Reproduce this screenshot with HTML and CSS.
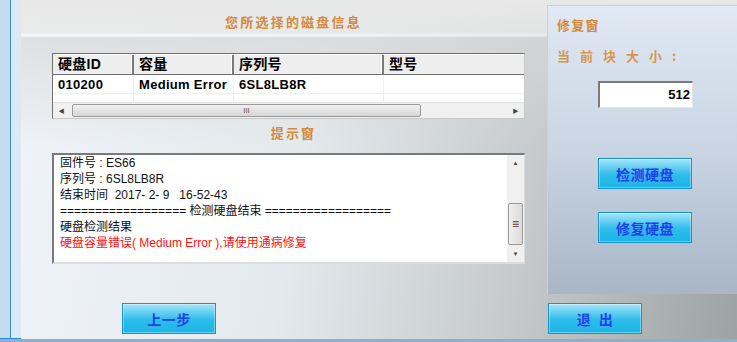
FILE: index.html
```html
<!DOCTYPE html>
<html lang="zh-CN">
  <head>
    <meta charset="UTF-8" />
    <title>硬盘检测修复</title>
    <link rel="stylesheet" href="styles.css">
  </head>
  <body>
    <div class="window">
      <div class="rail"></div>
      <div class="main">
        <div class="work">
          <div class="left">
            <h2 class="title">您所选择的磁盘信息</h2>
            <div class="grid">
              <div class="row head">
                <div class="cell c1">硬盘ID</div>
                <div class="cell c2">容量</div>
                <div class="cell c3">序列号</div>
                <div class="cell c4">型号</div>
              </div>
              <div class="row">
                <div class="cell c1">010200</div>
                <div class="cell c2">Medium Error</div>
                <div class="cell c3">6SL8LB8R</div>
                <div class="cell c4"></div>
              </div>
              <div class="row empty">
                <div class="cell c1"></div>
                <div class="cell c2"></div>
                <div class="cell c3"></div>
                <div class="cell c4"></div>
              </div>
              <div class="hscroll">
                <div class="arrow">&#9664;</div>
                <div class="hthumb">III</div>
                <div class="htrack"></div>
                <div class="arrow">&#9654;</div>
              </div>
            </div>
            <h2 class="title hint">提示窗</h2>
            <div class="log">
              <div class="lines">
                <div>固件号 : ES66</div>
                <div>序列号 : 6SL8LB8R</div>
                <div>结束时间&nbsp; 2017- 2- 9&nbsp;&nbsp; 16-52-43</div>
                <div>================== 检测硬盘结束 ==================</div>
                <div>硬盘检测结果</div>
                <div class="err">硬盘容量错误( Medium Error ),请使用通病修复</div>
              </div>
              <div class="vscroll">
                <div class="arrow">&#9650;</div>
                <div class="vgap1"></div>
                <div class="vthumb">&#8801;</div>
                <div class="arrow">&#9660;</div>
              </div>
            </div>
          </div>
          <div class="repair">
            <h2 class="title small">修复窗</h2>
            <div class="label">当前块大小:</div>
            <div class="field">512</div>
            <button class="btn check">检测硬盘</button>
            <button class="btn fix">修复硬盘</button>
          </div>
        </div>
        <div class="actions">
          <button class="btn">上一步</button>
          <button class="btn">退&nbsp;&nbsp;出</button>
        </div>
      </div>
    </div>
  </body>
</html>
```

FILE: styles.css
```css
* {
  box-sizing: border-box;
}
html,
body {
  margin: 0;
  width: 737px;
  height: 342px;
  overflow: hidden;
  background: #8eb0cc;
  font-family: "Liberation Sans", "Noto Sans CJK SC", sans-serif;
}
.window {
  display: flex;
  height: 339px;
}
.rail {
  width: 21px;
  background:
    linear-gradient(to right, transparent 0 10px, #2b8fd6 10px 11px, transparent 11px),
    linear-gradient(to right, #c6dcee 0 10px, #dce8f3 11px 21px);
  border-bottom: 1px solid #2b8fd6;
}
.main {
  flex: 1;
  display: flex;
  flex-direction: column;
  background:
    linear-gradient(to bottom, #e8e8e8 0, rgba(232, 232, 232, 0.8) 33px, rgba(255, 255, 255, 0.7) 35px, rgba(215, 215, 215, 0.7) 38px, rgba(235, 235, 235, 0) 150px),
    linear-gradient(100deg, #f0f4f8 0%, #e4e9ed 40%, #c6cacc 70%, #9da2a2 100%);
}
.work {
  display: flex;
  align-items: flex-start;
  height: 294px;
}
.left {
  width: 526px;
  padding: 13px 22px 0 31px;
}
.title {
  margin: 0;
  font-family: "Noto Sans CJK SC", sans-serif;
  font-size: 13px;
  line-height: 17px;
  font-weight: bold;
  color: #d48a3c;
  letter-spacing: 2.2px;
  text-align: center;
  padding-left: 10px;
}
.title.hint {
  margin-top: 5px;
}
.grid {
  margin-top: 23px;
  width: 473px;
  background: #fff;
  border-top: 1px solid #6f6f6f;
  border-left: 1px solid #6f6f6f;
  border-right: 1px solid #c8c8c8;
  border-bottom: 1px solid #c8c8c8;
}
.row {
  display: flex;
  height: 19px;
  border-bottom: 1px solid #f0f0f0;
}
.row.head {
  height: 21px;
  background: #eeeeee;
  border-bottom: 1px solid #6f6f6f;
  border-top: 1px solid #fff;
}
.row.empty {
  height: 8px;
  border-bottom: none;
}
.cell {
  font-size: 13px;
  font-weight: bold;
  line-height: 19px;
  padding-left: 5px;
  color: #000;
  border-right: 1px solid #eeeeee;
  white-space: nowrap;
  overflow: hidden;
  letter-spacing: 0.3px;
}
.head .cell {
  line-height: 19px;
  font-size: 14px;
  border-right: 2px solid;
  border-right-color: #7a7a7a;
  box-shadow: inset -1px 0 0 #fff;
}
.c1 { width: 81px; }
.c2 { width: 100px; }
.c3 { width: 150px; }
.c4 { flex: 1; border-right: none; }
.head .c4 { border-right: none; box-shadow: none; }
.hscroll {
  display: flex;
  height: 16px;
  background: #f0f0f0;
  border-top: 1px solid #e4e4e4;
}
.arrow {
  width: 17px;
  flex-shrink: 0;
  font-size: 6px;
  color: #444;
  display: flex;
  align-items: center;
  justify-content: center;
  background: #f0f0f0;
}
.hthumb {
  width: 349px;
  margin: 1px 0 1px 2px;
  border: 1px solid #9a9a9a;
  border-radius: 2px;
  background: linear-gradient(#f0f0f0, #d6d6d6);
  font-size: 8px;
  color: #555;
  text-align: center;
  line-height: 12px;
}
.htrack {
  flex: 1;
}
.log {
  margin-top: 12px;
  display: flex;
  height: 111px;
  background: #fff;
  border-top: 2px solid #7a7a7a;
  border-left: 2px solid #7a7a7a;
  border-right: 1px solid #dcdcdc;
  border-bottom: 2px solid #dcdcdc;
}
.lines {
  flex: 1;
  padding: 0 0 0 6px;
  font-size: 12px;
  line-height: 16px;
  color: #111;
  white-space: nowrap;
  overflow: hidden;
}
.err {
  color: #ff1010;
}
.vscroll {
  width: 17px;
  display: flex;
  flex-direction: column;
  background: #f0f0f0;
}
.vscroll .arrow {
  height: 16px;
  width: 17px;
}
.vgap1 {
  height: 32px;
  flex-shrink: 0;
}
.vthumb {
  height: 42px;
  flex-shrink: 0;
  margin: 0 1px 1px;
  border: 1px solid #9a9a9a;
  border-radius: 2px;
  background: linear-gradient(to right, #f0f0f0, #dadada);
  font-size: 12px;
  color: #6a2a40;
  display: flex;
  align-items: center;
  justify-content: center;
}
.repair {
  margin-top: 5px;
  width: 190px;
  height: 289px;
  padding: 10px 0 0 9px;
  border-top: 1px solid #c9d2dc;
  border-left: 1px solid #c9d2dc;
  background: linear-gradient(#e0e9f4, #c9d5e3 50%, #a8b6c6);
}
.title.small {
  text-align: left;
  padding-left: 0;
  letter-spacing: 1.2px;
}
.label {
  margin-top: 14px;
  font-family: "Noto Sans CJK SC", sans-serif;
  font-size: 13px;
  line-height: 17px;
  font-weight: bold;
  color: #d9954c;
  letter-spacing: 10px;
}
.field {
  margin: 17px 0 0 41px;
  width: 95px;
  height: 27px;
  background: #fff;
  border-top: 2px solid #7a7a7a;
  border-left: 2px solid #7a7a7a;
  border-right: 1px solid #e6e6e6;
  border-bottom: 1px solid #e6e6e6;
  font-size: 13px;
  font-weight: bold;
  text-align: right;
  padding-right: 2px;
  line-height: 23px;
}
.btn {
  display: block;
  width: 94px;
  height: 31px;
  padding: 0;
  border: 1px solid #1a92d2;
  background: linear-gradient(#a6e6fa 0%, #6ed2f2 25%, #2cbdeb 55%, #1ab5e6 100%);
  box-shadow: inset 0 0 0 1px rgba(255, 255, 255, 0.35);
  color: #1446e6;
  font-family: "Noto Sans CJK SC", sans-serif;
  font-size: 14px;
  font-weight: bold;
  letter-spacing: 0.5px;
  text-shadow: 0 0 2px #6aa8ff;
}
.btn.check {
  margin: 50px 0 0 41px;
}
.btn.fix {
  margin: 23px 0 0 41px;
}
.actions {
  display: flex;
  gap: 332px;
  padding: 9px 0 0 101px;
}
```
